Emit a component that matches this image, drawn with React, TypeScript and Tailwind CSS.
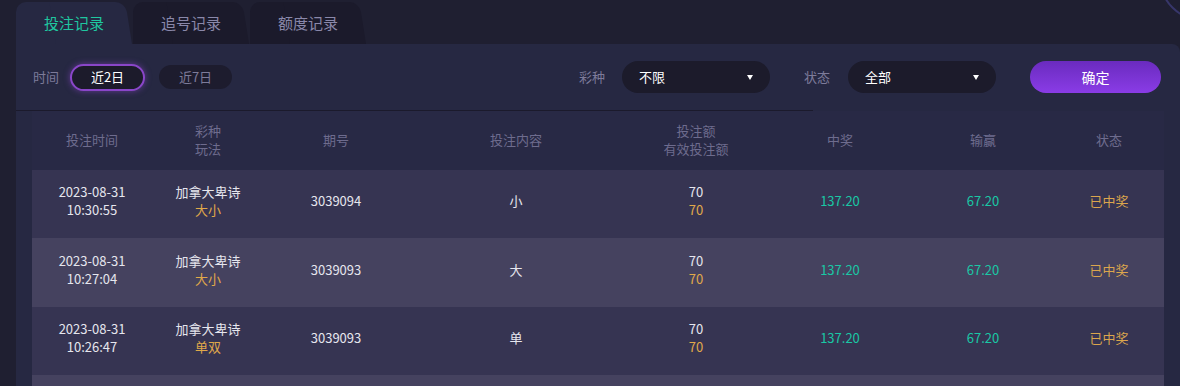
import type { ReactNode } from 'react'

// 投注记录页：顶部标签、筛选条、注单表格

type Row = {
  date: string
  time: string
  lottery: string
  play: string
  issue: string
  content: string
  amount: string
  valid: string
  win: string
  profit: string
  status: string
}

const rows: Row[] = [
  { date: '2023-08-31', time: '10:30:55', lottery: '加拿大卑诗', play: '大小', issue: '3039094', content: '小', amount: '70', valid: '70', win: '137.20', profit: '67.20', status: '已中奖' },
  { date: '2023-08-31', time: '10:27:04', lottery: '加拿大卑诗', play: '大小', issue: '3039093', content: '大', amount: '70', valid: '70', win: '137.20', profit: '67.20', status: '已中奖' },
  { date: '2023-08-31', time: '10:26:47', lottery: '加拿大卑诗', play: '单双', issue: '3039093', content: '单', amount: '70', valid: '70', win: '137.20', profit: '67.20', status: '已中奖' },
]

// 列宽加起来是 1132，和行宽一致
const cols = ['w-[120px]', 'w-[112px]', 'w-[144px]', 'w-[216px]', 'w-[144px]', 'w-[144px]', 'w-[142px]', 'w-[110px]']

function Tab({ label, active }: { label: string; active?: boolean }) {
  const bg = active ? 'bg-[#262842]' : 'bg-[#1b1a2b]'
  return (
    <div className="relative w-[116px] h-[42px] flex items-center justify-center">
      <div className={`absolute left-0 top-0 bottom-0 w-[70px] rounded-tl-[10px] ${bg}`} />
      <div className={`absolute left-[40px] right-0 top-0 bottom-0 rounded-tr-[10px] origin-bottom skew-x-[9deg] ${bg}`} />
      <span className={`relative text-[15px] ${active ? 'text-[#1fc7a0]' : 'text-[#8a88aa]'}`}>{label}</span>
    </div>
  )
}

function Select({ value }: { value: string }) {
  return (
    <div className="w-[148px] h-[32px] rounded-full bg-[#1c1b2b] flex items-center justify-between pl-[17px] pr-[17px]">
      <span className="text-[13px] text-white">{value}</span>
      <span className="w-0 h-0 border-l-[3.5px] border-r-[3.5px] border-t-[5px] border-l-transparent border-r-transparent border-t-white" />
    </div>
  )
}

function Cell({ i, children }: { i: number; children: ReactNode }) {
  return <div className={`${cols[i]} shrink-0 flex flex-col items-center justify-center text-center leading-[18px]`}>{children}</div>
}

export default function App() {
  return (
    <div
      className="relative w-[1180px] h-[386px] overflow-hidden bg-[#1f1f31]"
      style={{ fontFamily: '"Noto Sans CJK SC", "Noto Sans", sans-serif' }}
    >
      {/* 右上角装饰圆 */}
      <div className="absolute left-[1160px] top-[-60px] w-[80px] h-[80px] rounded-full border-2 border-[#37366a]" />

      <div className="pl-4 pt-[2px]">
        <div className="flex gap-[1px] h-[42px]">
          <Tab label="投注记录" active />
          <Tab label="追号记录" />
          <Tab label="额度记录" />
        </div>

        <div className="bg-[#262842] rounded-tr-[8px] h-[342px]">
          {/* 筛选条 */}
          <div className="h-[66px] flex items-center pl-[17px] pr-[19px] text-[13px]">
            <span className="text-[#7d7b9a]">时间</span>
            <div className="ml-[11px] w-[75px] h-[27px] rounded-full bg-[#1c1b2b] border-2 border-[#8a46c9] shadow-[0_0_6px_rgba(138,70,201,0.6)] flex items-center justify-center text-white">
              近2日
            </div>
            <div className="ml-[14px] w-[73px] h-[24px] rounded-full bg-[#1d1c2e] flex items-center justify-center text-[#7d7b9a]">
              近7日
            </div>
            <span className="ml-auto text-[#7d7b9a]">彩种</span>
            <div className="ml-[17px]">
              <Select value="不限" />
            </div>
            <span className="ml-[34px] text-[#7d7b9a]">状态</span>
            <div className="ml-[18px]">
              <Select value="全部" />
            </div>
            <button className="ml-[34px] w-[131px] h-[32px] rounded-full bg-gradient-to-b from-[#6a2bbf] to-[#8a3ce6] text-white text-[14px]">
              确定
            </button>
          </div>

          <div className="w-[797px] h-px bg-[#1b1a2c]" />

          {/* 表格 */}
          <div className="px-4">
            <div className="h-[59px] flex bg-[#282945] text-[13px] text-[#6e6c8e] pb-[2px]">
              <Cell i={0}>投注时间</Cell>
              <Cell i={1}>
                <span>彩种</span>
                <span>玩法</span>
              </Cell>
              <Cell i={2}>期号</Cell>
              <Cell i={3}>投注内容</Cell>
              <Cell i={4}>
                <span>投注额</span>
                <span>有效投注额</span>
              </Cell>
              <Cell i={5}>中奖</Cell>
              <Cell i={6}>输赢</Cell>
              <Cell i={7}>状态</Cell>
            </div>

            {rows.map((r, idx) => (
              <div
                key={idx}
                className={`flex text-[13px] text-[#e6e6ee] pb-[6px] ${idx % 2 === 0 ? 'bg-[#363452] h-[68px]' : 'bg-[#45425f] h-[69px]'}`}
              >
                <Cell i={0}>
                  <span>{r.date}</span>
                  <span>{r.time}</span>
                </Cell>
                <Cell i={1}>
                  <span>{r.lottery}</span>
                  <span className="text-[#e0a94a]">{r.play}</span>
                </Cell>
                <Cell i={2}>{r.issue}</Cell>
                <Cell i={3}>{r.content}</Cell>
                <Cell i={4}>
                  <span>{r.amount}</span>
                  <span className="text-[#e0a94a]">{r.valid}</span>
                </Cell>
                <Cell i={5}>
                  <span className="text-[#19c8a5]">{r.win}</span>
                </Cell>
                <Cell i={6}>
                  <span className="text-[#19c8a5]">{r.profit}</span>
                </Cell>
                <Cell i={7}>
                  <span className="text-[#dba54d]">{r.status}</span>
                </Cell>
              </div>
            ))}
            {/* 下一行只露出一截背景 */}
            <div className="h-[69px] bg-[#45425f]" />
          </div>
        </div>
      </div>
    </div>
  )
}
